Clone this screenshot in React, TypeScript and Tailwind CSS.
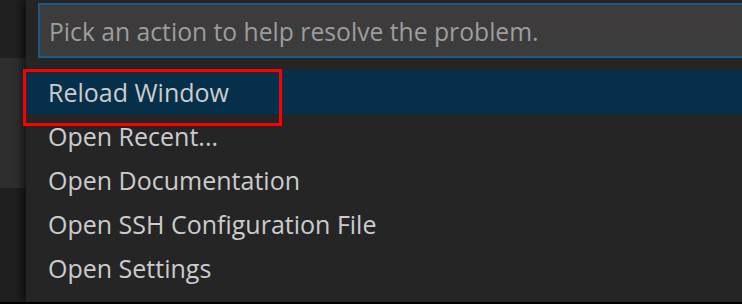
import React from "react";

const items = [
  "Reload Window",
  "Open Recent...",
  "Open Documentation",
  "Open SSH Configuration File",
  "Open Settings",
];

const App = () => {
  return (
    <div
      className="relative w-[742px] h-[304px] overflow-hidden flex flex-col bg-black"
      style={{ fontFamily: '"Open Sans", "Noto Sans", sans-serif' }}
    >
      <div className="flex flex-1 min-h-0">
        {/* editor strip behind the picker */}
        <div className="w-[26px] flex flex-col shrink-0">
          <div className="h-[58px] bg-[#202020]" />
          <div className="h-[130px] bg-[#2e2e2e]" />
          <div className="flex-1 bg-[#1f1f1f]" />
        </div>

        {/* quick pick */}
        <div className="flex-1 min-w-0 flex flex-col bg-[#252526] shadow-[-4px_0_8px_rgba(0,0,0,0.55)] z-10 overflow-hidden">
          <div className="pl-[12px] pt-[3px] h-[70px] shrink-0">
            <div className="w-[740px] h-[55px] bg-[#3c3c3c] border-2 border-[#1c5a86] flex items-center pl-[9px] pt-[2px]">
              <span className="text-[24.7px] text-[#9d9d9d] whitespace-nowrap">
                Pick an action to help resolve the problem.
              </span>
            </div>
          </div>

          <div className="flex flex-col">
            {items.map((label, i) => (
              <div
                key={label}
                className={
                  i === 0
                    ? "h-[44px] flex items-center pl-[22px] pt-[1px] bg-[#062f4a] text-[#cccccc] text-[25px] whitespace-nowrap"
                    : "h-[44px] flex items-center pl-[22px] pt-[1px] text-[#cccccc] text-[25px] whitespace-nowrap"
                }
              >
                {label}
              </div>
            ))}
          </div>
        </div>
      </div>
      <div className="h-[2px] bg-black shrink-0" />

      {/* annotation box */}
      <div className="absolute left-[23px] top-[69px] w-[259px] h-[57px] border-[3px] border-[#ff0000] z-20" />
    </div>
  );
};

export default App;
